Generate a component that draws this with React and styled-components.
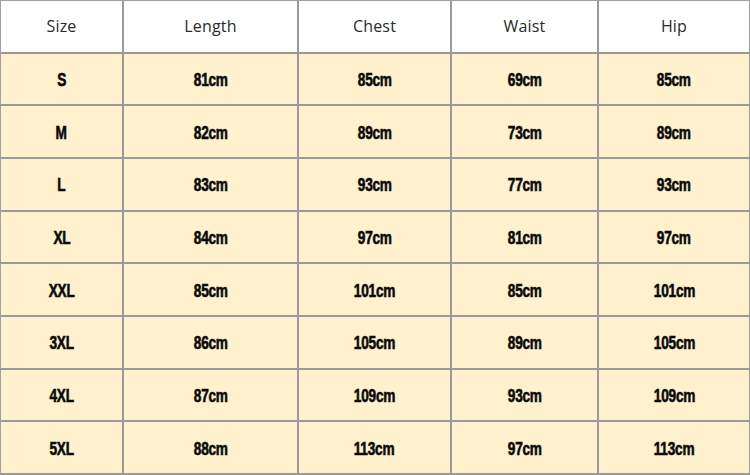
import React from "react";
import styled, { createGlobalStyle } from "styled-components";

const GlobalStyle = createGlobalStyle`
  html, body {
    margin: 0;
    padding: 0;
    background: #ffffff;
  }
`;

const columns = ["Size", "Length", "Chest", "Waist", "Hip"];
const widths = [123, 175, 153, 147, 152];

const rows = [
  ["S", "81cm", "85cm", "69cm", "85cm"],
  ["M", "82cm", "89cm", "73cm", "89cm"],
  ["L", "83cm", "93cm", "77cm", "93cm"],
  ["XL", "84cm", "97cm", "81cm", "97cm"],
  ["XXL", "85cm", "101cm", "85cm", "101cm"],
  ["3XL", "86cm", "105cm", "89cm", "105cm"],
  ["4XL", "87cm", "109cm", "93cm", "109cm"],
  ["5XL", "88cm", "113cm", "97cm", "113cm"],
];

const Chart = styled.div`
  width: 750px;
  height: 475px;
  box-sizing: border-box;
  display: grid;
  grid-template-columns: ${widths.map((w) => `${w}px`).join(" ")};
  grid-template-rows: repeat(9, 1fr);
  border-left: 1px solid #a0a0a0;
  border-top: 1px solid #a0a0a0;
`;

const Cell = styled.div`
  display: flex;
  align-items: center;
  justify-content: center;
  box-sizing: border-box;
  border-right: 2px solid #9a9a9a;
  border-bottom: 2px solid #9a9a9a;
  background: ${(p) => (p.head ? "#ffffff" : "#fff1cd")};
  padding-top: ${(p) => (p.head ? "0" : "3px")};
`;

const HeadLabel = styled.span`
  font-family: "Open Sans", "Noto Sans", sans-serif;
  font-size: 16px;
  font-weight: 400;
  color: #2a2a2a;
  letter-spacing: 0.2px;
`;

const Value = styled.span`
  display: inline-block;
  font-family: "Liberation Sans", Arial, sans-serif;
  font-size: 17.5px;
  font-weight: 700;
  color: #0a0a0a;
  letter-spacing: -0.3px;
  transform: scaleX(0.78);
  -webkit-text-stroke: 0.6px #0a0a0a;
`;

export default function App() {
  return (
    <>
      <GlobalStyle />
      <Chart>
        {columns.map((c) => (
          <Cell head key={c}>
            <HeadLabel>{c}</HeadLabel>
          </Cell>
        ))}
        {rows.map((r) =>
          r.map((v, i) => (
            <Cell key={r[0] + i}>
              <Value>{v}</Value>
            </Cell>
          ))
        )}
      </Chart>
    </>
  );
}
